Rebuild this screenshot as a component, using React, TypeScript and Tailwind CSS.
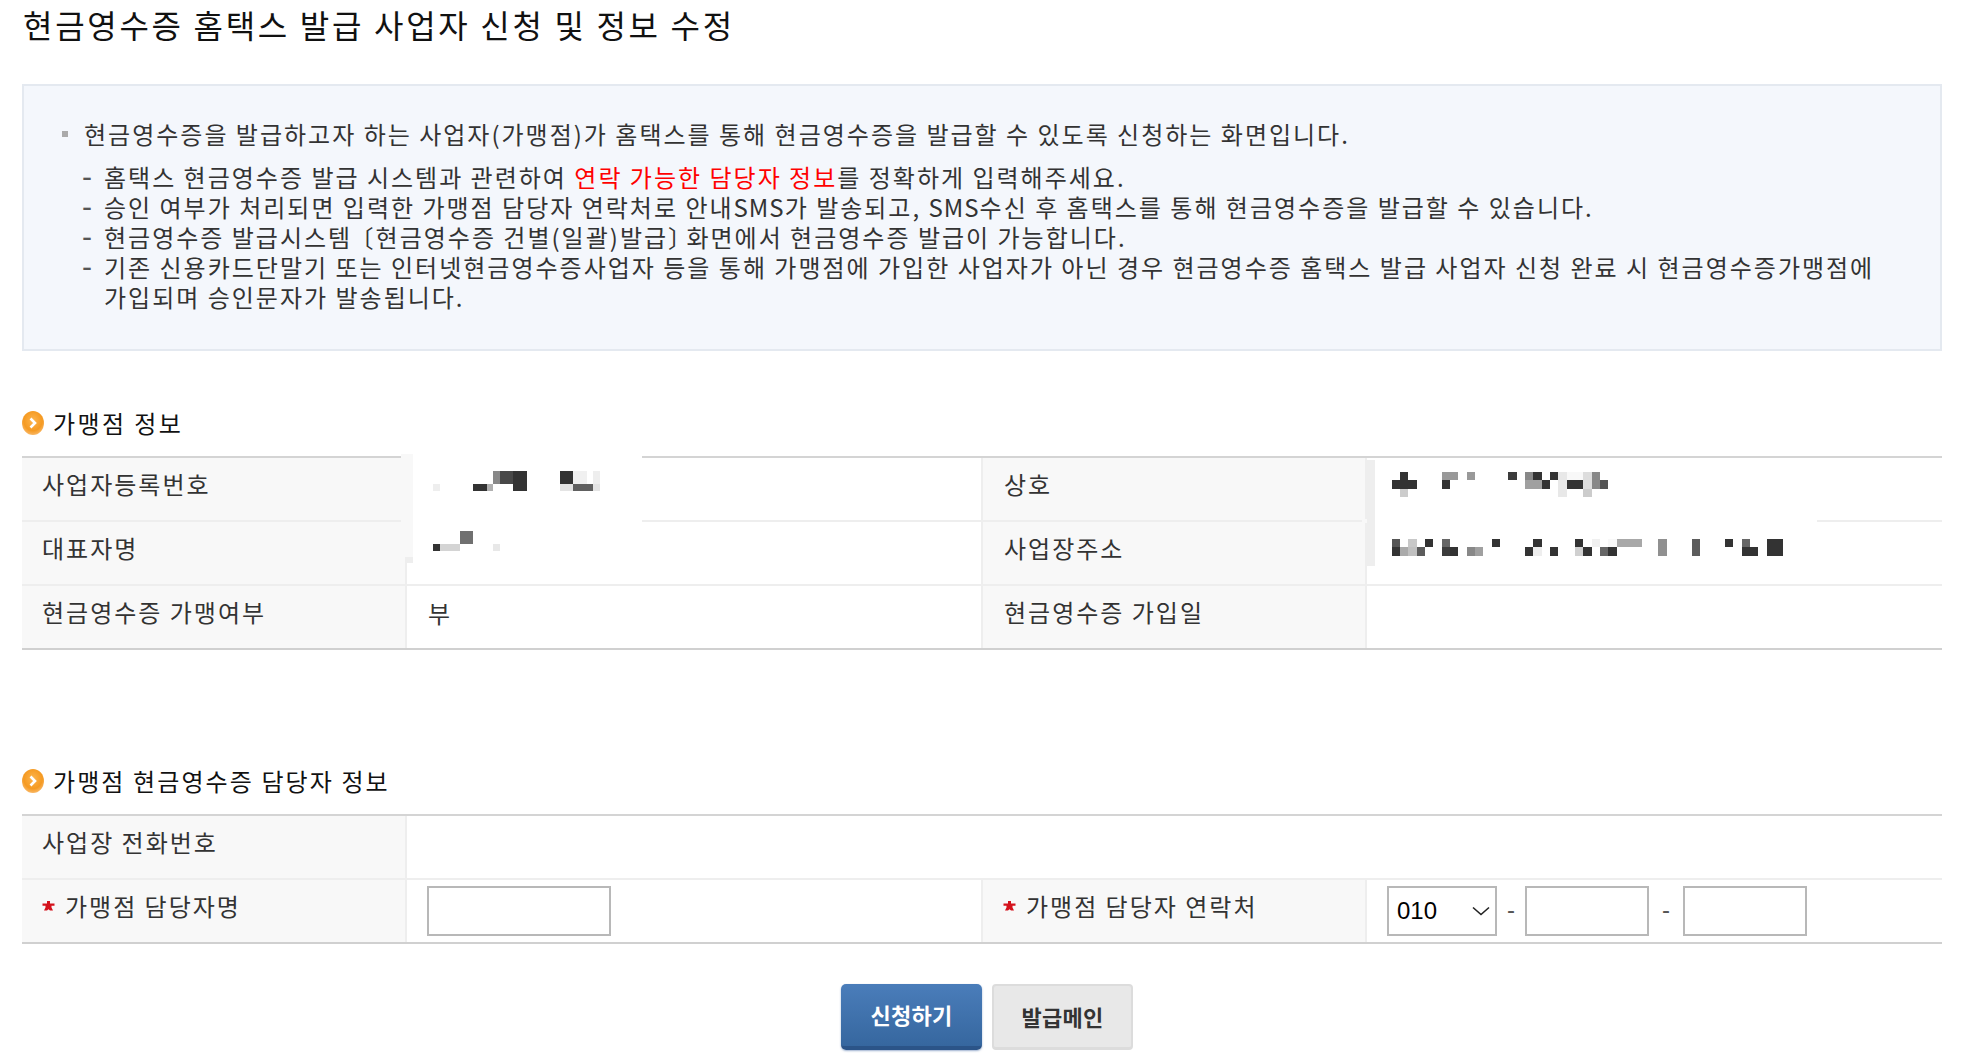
import React from "react";

const FONT = "[font-family:'Noto_Sans_CJK_KR','Liberation_Sans',sans-serif]";

const Arrow = ({ id }: { id: string }) => (
  <svg width="22" height="24" viewBox="0 0 22 24" className="shrink-0">
    <defs>
      <radialGradient id={id} cx="50%" cy="40%" r="60%">
        <stop offset="0%" stopColor="#fdb54e" />
        <stop offset="70%" stopColor="#f59a22" />
        <stop offset="100%" stopColor="#f9b765" />
      </radialGradient>
    </defs>
    <ellipse cx="11" cy="12" rx="11" ry="12" fill={`url(#${id})`} />
    <path d="M8.5 7.5 L13 12 L8.5 16.5" fill="none" stroke="#fff" strokeWidth="2.6" />
  </svg>
);

const Star = () => (
  <svg width="13" height="10" viewBox="0 0 13 10" className="shrink-0">
    <path d="M5 0 H8 V2.6 H12.5 V4.8 H9.5 V6.4 L11 9.6 H8 L6.5 8.2 L5 9.6 H2 L3.5 6.4 V4.8 H0.5 V2.6 H5 Z" fill="#d4121c" />
  </svg>
);

const Label = ({ children, cls = "" }: { children: React.ReactNode; cls?: string }) => (
  <div className={`bg-[#f8f8f8] pt-[11px] text-[24px] leading-[30px] tracking-[2px] text-[#333] ${cls}`}>{children}</div>
);

const Heading = ({ id, children, cls, track }: { id: string; children: React.ReactNode; cls: string; track: string }) => (
  <div className={`flex h-[30px] items-center gap-[9px] text-[24px] leading-[30px] text-[#111] ${track} ${cls}`}>
    <Arrow id={id} />
    <span>{children}</span>
  </div>
);

const px: [number, number, number, number, string][] = [
  [493, 471, 7, 13, "#888888"], [500, 471, 13, 13, "#484848"], [513, 471, 14, 20, "#333333"],
  [473, 484, 14, 7, "#333333"], [487, 484, 6, 7, "#b0b0b0"], [433, 484, 7, 7, "#eeeeee"],
  [560, 471, 13, 13, "#333333"], [573, 471, 14, 13, "#f0f0f0"], [593, 471, 7, 13, "#eeeeee"],
  [560, 484, 13, 7, "#e4e4e4"], [573, 484, 20, 7, "#606060"], [593, 484, 7, 7, "#e4e4e4"],
  [460, 531, 13, 13, "#707070"], [433, 544, 7, 7, "#333333"], [440, 544, 20, 7, "#d4d4d4"], [493, 544, 7, 7, "#e8e8e8"],
  [1400, 472, 8, 8, "#333333"], [1392, 480, 25, 9, "#333333"], [1400, 489, 8, 8, "#cccccc"],
  [1442, 472, 16, 8, "#999999"], [1442, 480, 8, 9, "#333333"], [1467, 472, 8, 8, "#999999"],
  [1508, 472, 9, 8, "#3c3c3c"], [1525, 472, 8, 8, "#888888"], [1533, 472, 9, 8, "#333333"],
  [1550, 472, 8, 8, "#333333"], [1558, 472, 9, 25, "#e8e8e8"], [1567, 472, 16, 8, "#f8f8f8"],
  [1583, 472, 9, 17, "#dddddd"], [1592, 472, 8, 8, "#888888"], [1525, 480, 17, 9, "#a0a0a0"],
  [1542, 480, 8, 9, "#333333"], [1567, 480, 16, 9, "#333333"], [1592, 480, 8, 9, "#888888"],
  [1600, 480, 8, 9, "#555555"], [1583, 489, 9, 8, "#cccccc"],
  [1392, 539, 8, 8, "#555555"], [1408, 539, 9, 8, "#c8c8c8"], [1425, 539, 8, 8, "#333333"],
  [1442, 539, 8, 8, "#666666"], [1492, 539, 8, 8, "#333333"], [1533, 539, 9, 8, "#333333"],
  [1575, 539, 8, 8, "#333333"], [1592, 539, 8, 8, "#f0f0f0"], [1608, 539, 9, 8, "#f8f8f8"],
  [1617, 539, 25, 8, "#a8a8a8"], [1392, 547, 8, 9, "#333333"], [1400, 547, 8, 9, "#aaaaaa"],
  [1408, 547, 9, 9, "#c0c0c0"], [1417, 547, 8, 9, "#5c5c5c"], [1442, 547, 8, 9, "#3c3c3c"],
  [1450, 547, 8, 9, "#333333"], [1467, 547, 8, 9, "#888888"], [1475, 547, 8, 9, "#a0a0a0"],
  [1525, 547, 8, 9, "#333333"], [1533, 547, 9, 9, "#eeeeee"], [1550, 547, 8, 9, "#333333"],
  [1575, 547, 8, 9, "#d0d0d0"], [1583, 547, 9, 9, "#333333"], [1600, 547, 8, 9, "#666666"],
  [1608, 547, 9, 9, "#333333"], [1658, 539, 9, 17, "#909090"], [1692, 539, 8, 17, "#5c5c5c"],
  [1725, 539, 8, 8, "#333333"], [1742, 539, 8, 8, "#666666"], [1742, 547, 16, 9, "#333333"],
  [1767, 539, 16, 17, "#333333"],
];

const Mosaic = () => (
  <svg width="1920" height="200" viewBox="22 450 1920 200" className="absolute left-0 top-[-8px]">
    <rect x="401" y="454" width="12" height="103" fill="#f8f8f8" />
    <rect x="413" y="450" width="229" height="110" fill="#fff" />
    <rect x="407" y="557" width="6" height="6" fill="#eeeeee" />
    <rect x="1375" y="515" width="442" height="10" fill="#fff" />
    <rect x="1362" y="519" width="5" height="4" fill="#f8f8f8" />
    <rect x="1367" y="460" width="8" height="106" fill="#eeeeee" />
    {px.map(([x, y, w, h, c], i) => (
      <rect key={i} x={x} y={y} width={w} height={h} fill={c} />
    ))}
  </svg>
);

const inputCls = "h-[50px] border-2 border-[#b8b8b8] bg-white outline-none";
const Sms = () => <span className="tracking-[1px]">SMS</span>;

export default function App() {
  return (
    <div className={`min-h-[1064px] bg-white pl-[22px] pr-[30px] ${FONT}`}>
      <h1 className="h-[50px] pl-[1px] text-[32px] font-normal leading-[48px] tracking-[2.7px] text-[#111]">
        현금영수증 홈택스 발급 사업자 신청 및 정보 수정
      </h1>

      <div className="mt-[34px] h-[267px] border-2 border-[#e4e9f0] bg-[#f4f7fc] pl-[38px] pr-[30px] pt-[33px] text-[24px] leading-[30px] tracking-[2px] text-[#333] [word-break:keep-all]">
        <div className="flex items-center">
          <span className="mr-[16px] h-[6px] w-[6px] shrink-0 bg-[#aaaaaa]" />
          <span>현금영수증을 발급하고자 하는 사업자(가맹점)가 홈택스를 통해 현금영수증을 발급할 수 있도록 신청하는 화면입니다.</span>
        </div>
        <ul className="mt-[13px] pl-[20px]">
          {[
            <>홈택스 현금영수증 발급 시스템과 관련하여 <span className="text-[#ff0000]">연락 가능한 담당자 정보</span>를 정확하게 입력해주세요.</>,
            <>승인 여부가 처리되면 입력한 가맹점 담당자 연락처로 안내<Sms />가 발송되고, <Sms />수신 후 홈택스를 통해 현금영수증을 발급할 수 있습니다.</>,
            <>현금영수증 발급시스템 <span className="ml-[-10px]">〔</span>현금영수증 건별(일괄)발급<span className="mr-[-15px]">〕</span> 화면에서 현금영수증 발급이 가능합니다.</>,
            <>기존 신용카드단말기 또는 인터넷현금영수증사업자 등을 통해 가맹점에 가입한 사업자가 아닌 경우 현금영수증 홈택스 발급 사업자 신청 완료 시 현금영수증가맹점에 가입되며 승인문자가 발송됩니다.</>,
          ].map((t, i) => (
            <li key={i} className="flex">
              <span className="w-[22px] shrink-0 font-['Liberation_Sans',sans-serif] text-[30px] tracking-normal text-[#555]">-</span>
              <span className="flex-1">{t}</span>
            </li>
          ))}
        </ul>
      </div>

      <Heading id="a1" cls="mt-[57px]" track="tracking-[2.4px]">가맹점 정보</Heading>

      <div className="relative mt-[18px] border-y-2 border-t-[#d4d4d4] border-b-[#d0d0d0] text-[24px] leading-[30px] tracking-[2px] text-[#333]">
        <div className="grid h-[62px] grid-cols-[385px_574px_386px_1fr]">
          <Label cls="border-r-2 border-[#eeeeee] pl-[20px]">사업자등록번호</Label>
          <div />
          <Label cls="border-x-2 border-[#eeeeee] pl-[21px]">상호</Label>
          <div />
        </div>
        <div className="grid h-[64px] grid-cols-[385px_574px_386px_1fr] border-t-2 border-[#eeeeee]">
          <Label cls="border-r-2 border-[#eeeeee] pl-[20px]">대표자명</Label>
          <div />
          <Label cls="border-x-2 border-[#eeeeee] pl-[21px]">사업장주소</Label>
          <div />
        </div>
        <div className="grid h-[64px] grid-cols-[385px_574px_386px_1fr] border-t-2 border-[#eeeeee]">
          <Label cls="border-r-2 border-[#eeeeee] pl-[20px]">현금영수증 가맹여부</Label>
          <div className="pl-[21px] pt-[12px]">부</div>
          <Label cls="border-x-2 border-[#eeeeee] pl-[21px]">현금영수증 가입일</Label>
          <div />
        </div>
        <Mosaic />
      </div>

      <Heading id="a2" cls="mt-[116px]" track="tracking-[2.1px]">가맹점 현금영수증 담당자 정보</Heading>

      <div className="mt-[18px] border-y-2 border-t-[#d4d4d4] border-b-[#d0d0d0] text-[24px] leading-[30px] tracking-[2px] text-[#333]">
        <div className="grid h-[62px] grid-cols-[385px_1fr]">
          <Label cls="border-r-2 border-[#eeeeee] pl-[20px]">사업장 전화번호</Label>
          <div />
        </div>
        <div className="grid h-[64px] grid-cols-[385px_574px_386px_1fr] border-t-2 border-[#eeeeee]">
          <Label cls="flex items-start gap-[10px] border-r-2 border-[#eeeeee] pl-[20px]">
            <span className="mt-[10px]"><Star /></span>
            <span>가맹점 담당자명</span>
          </Label>
          <div className="pl-[20px] pt-[6px]">
            <input className={`${inputCls} w-[184px]`} />
          </div>
          <Label cls="flex items-start gap-[10px] border-x-2 border-[#eeeeee] pl-[20px]">
            <span className="mt-[10px]"><Star /></span>
            <span>가맹점 담당자 연락처</span>
          </Label>
          <div className="flex items-start pl-[20px] pt-[6px]">
            <div className="relative h-[50px] w-[110px]">
              <select className="h-full w-full appearance-none border-2 border-[#b8b8b8] bg-white pl-[8px] font-['Liberation_Sans',sans-serif] text-[24px] tracking-normal text-black outline-none">
                <option>010</option>
              </select>
              <svg width="18" height="10" viewBox="0 0 18 10" className="pointer-events-none absolute right-[7px] top-[20px]">
                <path d="M1 1.5 L9 8.5 L17 1.5" fill="none" stroke="#222" strokeWidth="1.6" />
              </svg>
            </div>
            <span className="mt-[9px] w-[28px] text-center font-['Liberation_Sans',sans-serif] tracking-normal text-[#555]">-</span>
            <input className={`${inputCls} w-[124px]`} />
            <span className="mt-[9px] w-[34px] text-center font-['Liberation_Sans',sans-serif] tracking-normal text-[#555]">-</span>
            <input className={`${inputCls} w-[124px]`} />
          </div>
        </div>
      </div>

      <div className="mt-[40px] flex justify-center gap-[10px] pl-[10px]">
        <button className="h-[66px] w-[141px] rounded-[5px] border-b-[4px] border-b-[#2b5488] bg-gradient-to-b from-[#4a7dba] to-[#36679f] pb-[1px] text-[22px] font-bold tracking-[0.3px] text-white shadow-[0_1px_2px_rgba(60,100,160,0.5)]">
          신청하기
        </button>
        <button className="h-[66px] w-[141px] rounded-[4px] border-2 border-[#dcdcdc] border-b-[3px] bg-[#e8e8e8] pb-[1px] text-[22px] font-bold tracking-[0.3px] text-[#333]">
          발급메인
        </button>
      </div>
    </div>
  );
}
